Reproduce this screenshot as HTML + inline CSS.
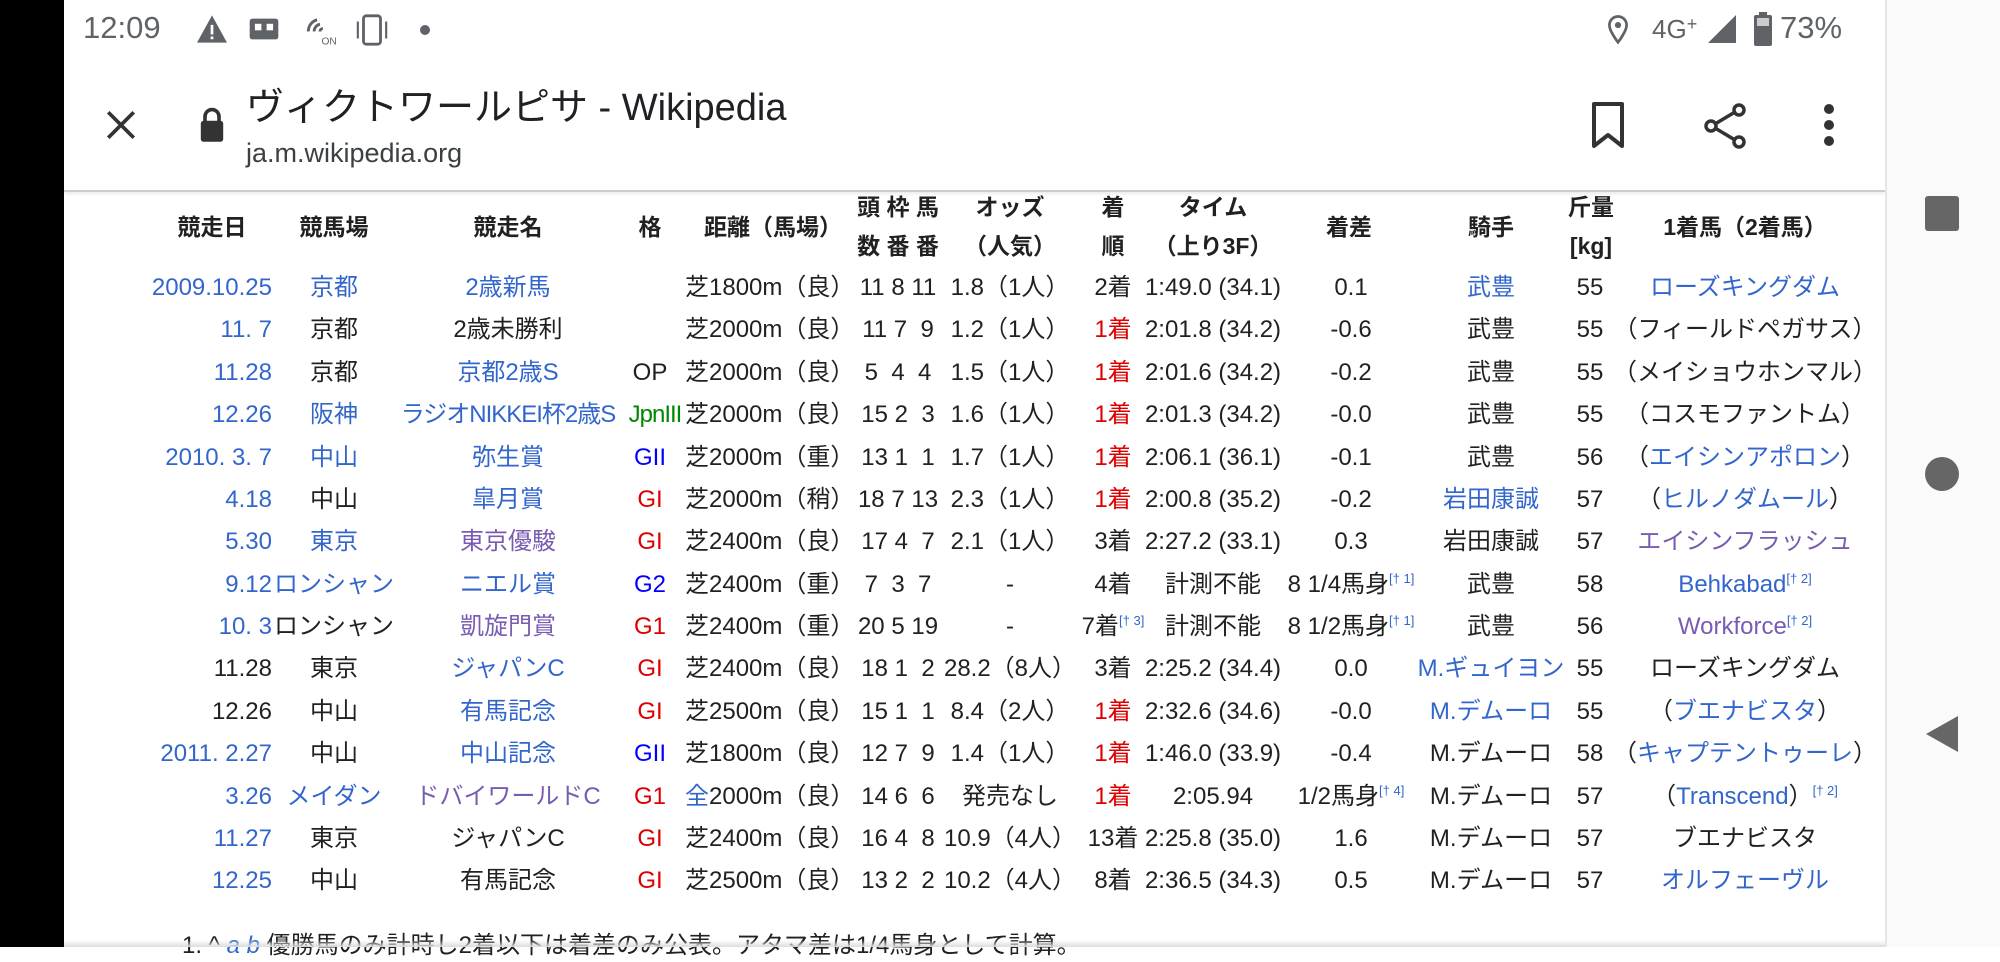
<!DOCTYPE html>
<html><head><meta charset="utf-8"><style>
*{margin:0;padding:0;box-sizing:border-box}
body{width:2000px;height:947px;overflow:hidden;background:#fff;position:relative;font-family:"Liberation Sans","Noto Sans CJK JP",sans-serif;color:#202122}
.abs{position:absolute}
#lb{left:0;top:0;width:64px;height:947px;background:#000}
#rb{left:1885px;top:0;width:115px;height:947px;background:#fafafa;border-left:2px solid #e6e6e6}
#hdr{left:64px;top:0;width:1821px;height:192px;background:#fff;border-bottom:2px solid #ccc;box-shadow:0 2px 3px rgba(0,0,0,.08)}
.sb{font-size:32px;color:#5f6368;top:10px}
.r{position:absolute;left:0;width:1885px;height:42px;font-size:24px;line-height:42px}
.r>span{position:absolute;white-space:nowrap}
.d{right:1613px;text-align:right}
.c{transform:translateX(-50%)}
.b{color:#3366cc}.p{color:#795cb2}.red{color:#d00}.bl{color:#00f}.g{color:#080}
sup{font-size:13px;line-height:0;vertical-align:9px}
.h{font-weight:bold;font-size:23px;position:absolute;white-space:nowrap;transform:translateX(-50%);line-height:39px}
</style></head><body>
<div id="hdr" class="abs"></div>
<div id="lb" class="abs"></div>
<div id="rb" class="abs"></div>
<!-- status bar -->
<div class="abs sb" style="left:83px;font-size:31px">12:09</div>
<svg class="abs" style="left:195px;top:14px" width="34" height="30" viewBox="0 0 24 22"><path d="M12 1L1 21h22z" fill="#5f6368"/><rect x="11" y="8" width="2" height="7" fill="#fff"/><rect x="11" y="16.5" width="2" height="2" fill="#fff"/></svg>
<svg class="abs" style="left:248px;top:16px" width="32" height="26" viewBox="0 0 24 20"><rect x="1" y="2" width="22" height="16" rx="2" fill="#5f6368"/><rect x="5" y="6" width="5" height="5" fill="#fff"/><rect x="14" y="6" width="5" height="5" fill="#fff"/></svg>
<svg class="abs" style="left:302px;top:14px" width="36" height="32" viewBox="0 0 24 22"><path d="M10 4a8 8 0 0 0-6 8M12 7a5 5 0 0 0-4 5M14 10a2 2 0 0 0-2 2" stroke="#5f6368" stroke-width="2" fill="none"/><text x="13" y="21" font-size="7" fill="#5f6368" font-family="Liberation Sans">ON</text></svg>
<svg class="abs" style="left:355px;top:12px" width="34" height="36" viewBox="0 0 24 24"><rect x="6" y="2" width="12" height="20" rx="2" stroke="#5f6368" stroke-width="2" fill="none"/><path d="M2 6v12M22 6v12" stroke="#5f6368" stroke-width="1.5"/></svg>
<div class="abs" style="left:420px;top:25px;width:10px;height:10px;border-radius:50%;background:#5f6368"></div>
<svg class="abs" style="left:1605px;top:14px" width="26" height="32" viewBox="0 0 20 26"><path d="M10 2a7 7 0 0 0-7 7c0 5 7 14 7 14s7-9 7-14a7 7 0 0 0-7-7z" stroke="#5f6368" stroke-width="2.2" fill="none"/><circle cx="10" cy="9" r="2.5" fill="#5f6368"/></svg>
<div class="abs sb" style="left:1652px;top:14px;font-size:26px">4G<sup style="font-size:18px;vertical-align:8px">+</sup></div>
<svg class="abs" style="left:1707px;top:14px" width="30" height="30"><path d="M29 1v28H1z" fill="#5f6368"/></svg>
<svg class="abs" style="left:1753px;top:12px" width="20" height="34"><rect x="6" y="0" width="8" height="4" fill="#5f6368"/><rect x="1" y="3" width="18" height="31" rx="2" fill="#5f6368"/><rect x="4" y="6" width="12" height="8" fill="#ccc"/></svg>
<div class="abs sb" style="left:1780px;font-size:31px">73%</div>
<!-- toolbar -->
<svg class="abs" style="left:104px;top:108px" width="34" height="34" viewBox="0 0 24 24"><path d="M3 3L21 21M21 3L3 21" stroke="#333" stroke-width="2.6"/></svg>
<svg class="abs" style="left:198px;top:106px" width="28" height="38" viewBox="0 0 20 26"><path d="M5 11V7a5 5 0 0 1 10 0v4" stroke="#333" stroke-width="2.6" fill="none"/><rect x="2" y="10" width="16" height="15" rx="2" fill="#333"/></svg>
<div class="abs" style="left:246px;top:84px;font-size:38px;color:#202124;line-height:48px;font-family:'Liberation Sans','Noto Sans CJK JP',sans-serif">ヴィクトワールピサ - Wikipedia</div>
<div class="abs" style="left:246px;top:136px;font-size:27px;color:#3c4043;line-height:34px">ja.m.wikipedia.org</div>
<svg class="abs" style="left:1590px;top:101px" width="36" height="48" viewBox="0 0 36 48"><path d="M4 3h28v42L18 34 4 45z" stroke="#333" stroke-width="4" fill="none" stroke-linejoin="round"/></svg>
<svg class="abs" style="left:1702px;top:102px" width="46" height="48" viewBox="0 0 46 48"><circle cx="37" cy="8" r="5" stroke="#333" stroke-width="3.5" fill="none"/><circle cx="9" cy="24" r="5" stroke="#333" stroke-width="3.5" fill="none"/><circle cx="37" cy="40" r="5" stroke="#333" stroke-width="3.5" fill="none"/><path d="M13 22L33 10M13 26L33 38" stroke="#333" stroke-width="3.5"/></svg>
<svg class="abs" style="left:1821px;top:102px" width="16" height="46"><circle cx="8" cy="7" r="5" fill="#333"/><circle cx="8" cy="23" r="5" fill="#333"/><circle cx="8" cy="39" r="5" fill="#333"/></svg>
<!-- nav -->
<div class="abs" style="left:1925px;top:196px;width:34px;height:35px;border-radius:3px;background:#666"></div>
<div class="abs" style="left:1925px;top:457px;width:34px;height:34px;border-radius:50%;background:#666"></div>
<svg class="abs" style="left:1924px;top:714px" width="36" height="40"><path d="M2 20L34 2v36z" fill="#666"/></svg>
<!-- table header -->
<div style="position:absolute;left:0;top:208px;width:1885px">
<div class="h" style="left:212px;top:0">競走日</div>
<div class="h" style="left:334px;top:0">競馬場</div>
<div class="h" style="left:508px;top:0">競走名</div>
<div class="h" style="left:650px;top:0">格</div>
<div class="h" style="left:773px;top:0">距離（馬場）</div>
<div class="h" style="left:898px;top:-20px">頭 枠 馬</div>
<div class="h" style="left:898px;top:19px">数 番 番</div>
<div class="h" style="left:1010px;top:-20px">オッズ</div>
<div class="h" style="left:1010px;top:19px">（人気）</div>
<div class="h" style="left:1113px;top:-20px">着</div>
<div class="h" style="left:1113px;top:19px">順</div>
<div class="h" style="left:1213px;top:-20px">タイム</div>
<div class="h" style="left:1213px;top:19px">（上り3F）</div>
<div class="h" style="left:1349px;top:0">着差</div>
<div class="h" style="left:1491px;top:0">騎手</div>
<div class="h" style="left:1591px;top:-20px">斤量</div>
<div class="h" style="left:1591px;top:19px">[kg]</div>
<div class="h" style="left:1745px;top:0">1着馬（2着馬）</div>
</div>
<!-- rows -->
<div class="r" style="top:267px"><span class="d b">2009.10.25</span><span class="c b" style="left:334px">京都</span><span class="c b" style="left:508px">2歳新馬</span><span style="left:685px">芝1800m（良）</span><span class="c" style="left:898px">11 8 11</span><span class="c" style="left:1010px">1.8（1人）</span><span class="c" style="left:1113px">2着</span><span class="c" style="left:1213px">1:49.0 (34.1)</span><span class="c" style="left:1351px">0.1</span><span class="c b" style="left:1491px">武豊</span><span class="c" style="left:1590px">55</span><span class="c b" style="left:1745px">ローズキングダム</span></div>
<div class="r" style="top:309px"><span class="d b">11.&nbsp;7</span><span class="c" style="left:334px">京都</span><span class="c" style="left:508px">2歳未勝利</span><span style="left:685px">芝2000m（良）</span><span class="c" style="left:898px">11 7&nbsp; 9</span><span class="c" style="left:1010px">1.2（1人）</span><span class="c" style="left:1113px"><span class="red">1着</span></span><span class="c" style="left:1213px">2:01.8 (34.2)</span><span class="c" style="left:1351px">-0.6</span><span class="c" style="left:1491px">武豊</span><span class="c" style="left:1590px">55</span><span class="c" style="left:1745px">（フィールドペガサス）</span></div>
<div class="r" style="top:352px"><span class="d b">11.28</span><span class="c" style="left:334px">京都</span><span class="c b" style="left:508px">京都2歳S</span><span class="c" style="left:650px">OP</span><span style="left:685px">芝2000m（良）</span><span class="c" style="left:898px">5&nbsp; 4&nbsp; 4</span><span class="c" style="left:1010px">1.5（1人）</span><span class="c red" style="left:1113px">1着</span><span class="c" style="left:1213px">2:01.6 (34.2)</span><span class="c" style="left:1351px">-0.2</span><span class="c" style="left:1491px">武豊</span><span class="c" style="left:1590px">55</span><span class="c" style="left:1745px">（メイショウホンマル）</span></div>
<div class="r" style="top:394px"><span class="d b">12.26</span><span class="c b" style="left:334px">阪神</span><span class="c b" style="left:508px;letter-spacing:-1px">ラジオNIKKEI杯2歳S</span><span class="c g" style="left:655px;letter-spacing:-1px">JpnIII</span><span style="left:685px">芝2000m（良）</span><span class="c" style="left:898px">15 2&nbsp; 3</span><span class="c" style="left:1010px">1.6（1人）</span><span class="c red" style="left:1113px">1着</span><span class="c" style="left:1213px">2:01.3 (34.2)</span><span class="c" style="left:1351px">-0.0</span><span class="c" style="left:1491px">武豊</span><span class="c" style="left:1590px">55</span><span class="c" style="left:1745px">（コスモファントム）</span></div>
<div class="r" style="top:437px"><span class="d b">2010.&nbsp;3.&nbsp;7</span><span class="c b" style="left:334px">中山</span><span class="c b" style="left:508px">弥生賞</span><span class="c bl" style="left:650px">GII</span><span style="left:685px">芝2000m（重）</span><span class="c" style="left:898px">13 1&nbsp; 1</span><span class="c" style="left:1010px">1.7（1人）</span><span class="c red" style="left:1113px">1着</span><span class="c" style="left:1213px">2:06.1 (36.1)</span><span class="c" style="left:1351px">-0.1</span><span class="c" style="left:1491px">武豊</span><span class="c" style="left:1590px">56</span><span class="c" style="left:1745px">（<span class="b">エイシンアポロン</span>）</span></div>
<div class="r" style="top:479px"><span class="d b">4.18</span><span class="c" style="left:334px">中山</span><span class="c b" style="left:508px">皐月賞</span><span class="c red" style="left:650px">GI</span><span style="left:685px">芝2000m（稍）</span><span class="c" style="left:898px">18 7 13</span><span class="c" style="left:1010px">2.3（1人）</span><span class="c red" style="left:1113px">1着</span><span class="c" style="left:1213px">2:00.8 (35.2)</span><span class="c" style="left:1351px">-0.2</span><span class="c b" style="left:1491px">岩田康誠</span><span class="c" style="left:1590px">57</span><span class="c" style="left:1745px">（<span class="b">ヒルノダムール</span>）</span></div>
<div class="r" style="top:521px"><span class="d b">5.30</span><span class="c b" style="left:334px">東京</span><span class="c p" style="left:508px">東京優駿</span><span class="c red" style="left:650px">GI</span><span style="left:685px">芝2400m（良）</span><span class="c" style="left:898px">17 4&nbsp; 7</span><span class="c" style="left:1010px">2.1（1人）</span><span class="c" style="left:1113px">3着</span><span class="c" style="left:1213px">2:27.2 (33.1)</span><span class="c" style="left:1351px">0.3</span><span class="c" style="left:1491px">岩田康誠</span><span class="c" style="left:1590px">57</span><span class="c p" style="left:1745px">エイシンフラッシュ</span></div>
<div class="r" style="top:564px"><span class="d b">9.12</span><span class="c b" style="left:334px">ロンシャン</span><span class="c b" style="left:508px">ニエル賞</span><span class="c bl" style="left:650px">G2</span><span style="left:685px">芝2400m（重）</span><span class="c" style="left:898px">7&nbsp; 3&nbsp; 7</span><span class="c" style="left:1010px">-</span><span class="c" style="left:1113px">4着</span><span class="c" style="left:1213px">計測不能</span><span class="c" style="left:1351px">8 1/4馬身<sup class="b">[† 1]</sup></span><span class="c" style="left:1491px">武豊</span><span class="c" style="left:1590px">58</span><span class="c b" style="left:1745px">Behkabad<sup>[† 2]</sup></span></div>
<div class="r" style="top:606px"><span class="d b">10.&nbsp;3</span><span class="c" style="left:334px">ロンシャン</span><span class="c p" style="left:508px">凱旋門賞</span><span class="c red" style="left:650px">G1</span><span style="left:685px">芝2400m（重）</span><span class="c" style="left:898px">20 5 19</span><span class="c" style="left:1010px">-</span><span class="c" style="left:1113px">7着<sup class="b">[† 3]</sup></span><span class="c" style="left:1213px">計測不能</span><span class="c" style="left:1351px">8 1/2馬身<sup class="b">[† 1]</sup></span><span class="c" style="left:1491px">武豊</span><span class="c" style="left:1590px">56</span><span class="c p" style="left:1745px">Workforce<sup class="b">[† 2]</sup></span></div>
<div class="r" style="top:648px"><span class="d">11.28</span><span class="c" style="left:334px">東京</span><span class="c b" style="left:508px">ジャパンC</span><span class="c red" style="left:650px">GI</span><span style="left:685px">芝2400m（良）</span><span class="c" style="left:898px">18 1&nbsp; 2</span><span class="c" style="left:1010px">28.2（8人）</span><span class="c" style="left:1113px">3着</span><span class="c" style="left:1213px">2:25.2 (34.4)</span><span class="c" style="left:1351px">0.0</span><span class="c b" style="left:1491px">M.ギュイヨン</span><span class="c" style="left:1590px">55</span><span class="c" style="left:1745px">ローズキングダム</span></div>
<div class="r" style="top:691px"><span class="d">12.26</span><span class="c" style="left:334px">中山</span><span class="c b" style="left:508px">有馬記念</span><span class="c red" style="left:650px">GI</span><span style="left:685px">芝2500m（良）</span><span class="c" style="left:898px">15 1&nbsp; 1</span><span class="c" style="left:1010px">8.4（2人）</span><span class="c red" style="left:1113px">1着</span><span class="c" style="left:1213px">2:32.6 (34.6)</span><span class="c" style="left:1351px">-0.0</span><span class="c b" style="left:1491px">M.デムーロ</span><span class="c" style="left:1590px">55</span><span class="c" style="left:1745px">（<span class="b">ブエナビスタ</span>）</span></div>
<div class="r" style="top:733px"><span class="d b">2011.&nbsp;2.27</span><span class="c" style="left:334px">中山</span><span class="c b" style="left:508px">中山記念</span><span class="c bl" style="left:650px">GII</span><span style="left:685px">芝1800m（良）</span><span class="c" style="left:898px">12 7&nbsp; 9</span><span class="c" style="left:1010px">1.4（1人）</span><span class="c red" style="left:1113px">1着</span><span class="c" style="left:1213px">1:46.0 (33.9)</span><span class="c" style="left:1351px">-0.4</span><span class="c" style="left:1491px">M.デムーロ</span><span class="c" style="left:1590px">58</span><span class="c" style="left:1745px">（<span class="b">キャプテントゥーレ</span>）</span></div>
<div class="r" style="top:776px"><span class="d b">3.26</span><span class="c b" style="left:334px">メイダン</span><span class="c p" style="left:508px">ドバイワールドC</span><span class="c red" style="left:650px">G1</span><span style="left:685px"><span class="b">全</span>2000m（良）</span><span class="c" style="left:898px">14 6&nbsp; 6</span><span class="c" style="left:1010px">発売なし</span><span class="c red" style="left:1113px">1着</span><span class="c" style="left:1213px">2:05.94</span><span class="c" style="left:1351px">1/2馬身<sup class="b">[† 4]</sup></span><span class="c" style="left:1491px">M.デムーロ</span><span class="c" style="left:1590px">57</span><span class="c" style="left:1745px">（<span class="b">Transcend</span>）<sup class="b">[† 2]</sup></span></div>
<div class="r" style="top:818px"><span class="d b">11.27</span><span class="c" style="left:334px">東京</span><span class="c" style="left:508px">ジャパンC</span><span class="c red" style="left:650px">GI</span><span style="left:685px">芝2400m（良）</span><span class="c" style="left:898px">16 4&nbsp; 8</span><span class="c" style="left:1010px">10.9（4人）</span><span class="c" style="left:1113px">13着</span><span class="c" style="left:1213px">2:25.8 (35.0)</span><span class="c" style="left:1351px">1.6</span><span class="c" style="left:1491px">M.デムーロ</span><span class="c" style="left:1590px">57</span><span class="c" style="left:1745px">ブエナビスタ</span></div>
<div class="r" style="top:860px"><span class="d b">12.25</span><span class="c" style="left:334px">中山</span><span class="c" style="left:508px">有馬記念</span><span class="c red" style="left:650px">GI</span><span style="left:685px">芝2500m（良）</span><span class="c" style="left:898px">13 2&nbsp; 2</span><span class="c" style="left:1010px">10.2（4人）</span><span class="c" style="left:1113px">8着</span><span class="c" style="left:1213px">2:36.5 (34.3)</span><span class="c" style="left:1351px">0.5</span><span class="c" style="left:1491px">M.デムーロ</span><span class="c" style="left:1590px">57</span><span class="c b" style="left:1745px">オルフェーヴル</span></div>
<div class="abs" style="left:182px;top:930px;font-size:24px;line-height:32px;white-space:nowrap">1. ^ <i class="b">a</i> <i class="b">b</i> 優勝馬のみ計時し2着以下は着差のみ公表。アタマ差は1/4馬身として計算。</div>
<div class="abs" style="left:64px;top:940px;width:1821px;height:7px;background:linear-gradient(#fff0,#ddd)"></div>
</body></html>
